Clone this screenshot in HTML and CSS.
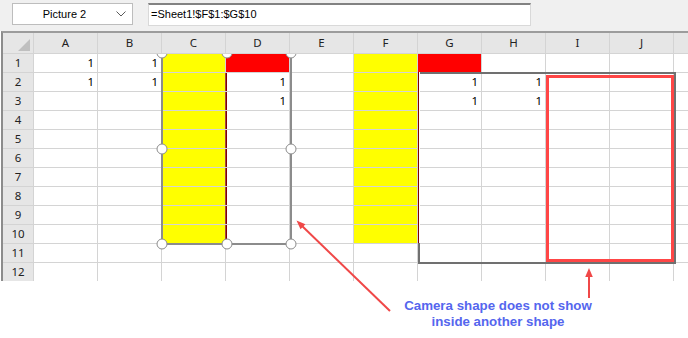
FILE: index.html
```html
<!DOCTYPE html>
<html lang="en">
<head>
  <meta charset="UTF-8">
  <title>Camera shape</title>
  <link rel="stylesheet" href="styles.css">
</head>
<body>

  <!-- Name box + formula bar -->
  <div class="topbar">
    <div class="namebox">
      <span class="name">Picture 2</span>
      <span class="chev">
        <svg width="10" height="6" viewBox="0 0 10 6"><polyline points="0.5,0.5 5,5 9.5,0.5" fill="none" stroke="#5a5a5a" stroke-width="1"/></svg>
      </span>
    </div>
    <div class="formula">=Sheet1!$F$1:$G$10</div>
  </div>

  <!-- Worksheet grid -->
  <div class="sheet">
    <div class="h corner"><span class="tri"></span></div><div class="h">A</div><div class="h">B</div><div class="h">C</div><div class="h">D</div><div class="h">E</div><div class="h">F</div><div class="h">G</div><div class="h">H</div><div class="h">I</div><div class="h">J</div><div class="h"></div>
    <div class="rh">1</div><div class="n">1</div><div class="n">1</div><div class="y"></div><div class="r"></div><div></div><div class="y"></div><div class="r"></div><div></div><div></div><div></div><div></div>
    <div class="rh">2</div><div class="n">1</div><div class="n">1</div><div class="y"></div><div class="n dl">1</div><div></div><div class="y"></div><div class="n">1</div><div class="n">1</div><div></div><div></div><div></div>
    <div class="rh">3</div><div></div><div></div><div class="y"></div><div class="n dl">1</div><div></div><div class="y"></div><div class="n">1</div><div class="n">1</div><div></div><div></div><div></div>
    <div class="rh">4</div><div></div><div></div><div class="y"></div><div class="dl"></div><div></div><div class="y"></div><div></div><div></div><div></div><div></div><div></div>
    <div class="rh">5</div><div></div><div></div><div class="y"></div><div class="dl"></div><div></div><div class="y"></div><div></div><div></div><div></div><div></div><div></div>
    <div class="rh">6</div><div></div><div></div><div class="y"></div><div class="dl"></div><div></div><div class="y"></div><div></div><div></div><div></div><div></div><div></div>
    <div class="rh">7</div><div></div><div></div><div class="y"></div><div class="dl"></div><div></div><div class="y"></div><div></div><div></div><div></div><div></div><div></div>
    <div class="rh">8</div><div></div><div></div><div class="y"></div><div class="dl"></div><div></div><div class="y"></div><div></div><div></div><div></div><div></div><div></div>
    <div class="rh">9</div><div></div><div></div><div class="y"></div><div class="dl"></div><div></div><div class="y"></div><div></div><div></div><div></div><div></div><div></div>
    <div class="rh">10</div><div></div><div></div><div class="y"></div><div class="dl"></div><div></div><div class="y"></div><div></div><div></div><div></div><div></div><div></div>
    <div class="rh">11</div><div></div><div></div><div></div><div></div><div></div><div></div><div></div><div></div><div></div><div></div><div></div>
    <div class="rh">12</div><div></div><div></div><div></div><div></div><div></div><div></div><div></div><div></div><div></div><div></div><div></div>
  </div>

  <!-- Shapes floating over the cells -->
  <div class="layer">
    <div class="cam">
      <span class="handle hl ht"></span><span class="handle hc ht"></span><span class="handle hr ht"></span>
      <span class="handle hl hm"></span><span class="handle hr hm"></span>
      <span class="handle hl hb"></span><span class="handle hc hb"></span><span class="handle hr hb"></span>
    </div>
    <div class="frame"></div>
    <div class="focus"></div>
  </div>

  <!-- Callout -->
  <svg class="arrows" width="688" height="338" viewBox="0 0 688 338">
    <line x1="390" y1="311" x2="300" y2="224" stroke="#f04848" stroke-width="2"/>
    <polygon points="296.5,220.5 305.4,224.2 300.5,229.3" fill="#f04848"/>
    <line x1="589" y1="298" x2="589" y2="274" stroke="#f04848" stroke-width="2"/>
    <polygon points="589,268 592.8,277 585.2,277" fill="#f04848"/>
  </svg>
  <div class="note">Camera shape does not show<br>inside another shape</div>

</body>
</html>
```

FILE: styles.css
```css
  body {
    margin: 0;
    width: 688px;
    height: 338px;
    overflow: hidden;
    position: relative;
    background: #fff;
    font-family: "Noto Sans", sans-serif;
    color: #000;
  }

  /* Top bar */
  .topbar {
    height: 31px;
    box-sizing: border-box;
    background: #f0f0f0;
    display: flex;
    align-items: flex-start;
    gap: 15px;
    padding: 3px 0 0 12px;
    font-family: "Liberation Sans", Arial, sans-serif;
    font-size: 11px;
  }

  .namebox {
    width: 121px;
    height: 22px;
    box-sizing: border-box;
    border: 1px solid #bdbdbd;
    background: #fff;
    display: flex;
    align-items: center;
  }

  .name {
    flex: 1;
    text-align: center;
    padding-left: 4px;
  }

  .chev {
    width: 18px;
    margin-right: 2px;
    display: flex;
    justify-content: center;
  }

  .formula {
    width: 383px;
    height: 23px;
    box-sizing: border-box;
    background: #fff;
    border: 1px solid #d9d9d9;
    border-top: 2px solid #828282;
    padding-left: 2px;
    line-height: 19px;
  }

  /* Grid */
  .sheet {
    margin-left: 1px;
    border-top: 2px solid #9c9c9c;
    border-left: 2px solid #8c8c8c;
    display: grid;
    grid-template-columns: 30px repeat(10, 63px) 1fr;
    grid-template-rows: 20px repeat(12, 18px);
    gap: 1px;
    background: #d4d4d4;
    font-size: 11.5px;
  }

  .sheet > div {
    background: #fff;
    line-height: 18px;
    padding: 0 3px;
    box-sizing: border-box;
  }

  .sheet > .h {
    background: #e6e6e6;
    color: #222;
    text-align: center;
    line-height: 20px;
  }

  .sheet > .rh {
    background: #e6e6e6;
    color: #222;
    text-align: center;
    padding: 0;
  }

  .sheet > .corner {
    display: flex;
    justify-content: flex-end;
    align-items: flex-end;
    padding: 0 3px 2px 0;
  }

  .tri {
    width: 12px;
    height: 12px;
    background: #bfbfbf;
    clip-path: polygon(100% 0, 100% 100%, 0 100%);
  }

  .n { text-align: right; }
  .sheet > .y { background: #ffff00; }
  .sheet > .r { background: #ff0000; }
  .dl {
    border-left: 1px solid #800000;
    box-shadow: -1px 0 0 #a04848;
  }

  /* Shapes */
  .layer {
    position: absolute;
    left: 0;
    top: 54px;
    width: 688px;
    height: 227px;
    overflow: hidden;
    pointer-events: none;
  }

  .cam {
    position: absolute;
    left: 161px;
    top: -2px;
    width: 131px;
    height: 193px;
    box-sizing: border-box;
    border: 2px solid #8c8c8c;
  }

  .handle {
    position: absolute;
    width: 11px;
    height: 11px;
    box-sizing: border-box;
    border: 1.5px solid #8c8c8c;
    border-radius: 50%;
    background: #fff;
    transform: translate(-50%, -50%);
  }
  .hl { left: -1px; }
  .hc { left: 50%; }
  .hr { left: calc(100% + 1px); }
  .ht { top: -1px; }
  .hm { top: 50%; }
  .hb { top: calc(100% + 1px); }

  .frame {
    position: absolute;
    left: 418px;
    top: 18px;
    width: 258px;
    height: 192px;
    box-sizing: border-box;
    border: 2px solid #707070;
  }

  .frame::before {
    content: "";
    position: absolute;
    left: -2px;
    top: -2px;
    width: 2px;
    height: 171px;
    background: linear-gradient(90deg, #800000 50%, #fff 50%);
  }

  .focus {
    position: absolute;
    left: 546px;
    top: 21px;
    width: 128px;
    height: 187px;
    box-sizing: border-box;
    border: 3px solid #ff4646;
  }

  .arrows {
    position: absolute;
    left: 0;
    top: 0;
    pointer-events: none;
  }

  /* Annotation */
  .note {
    width: 240px;
    margin: 17px 0 0 378px;
    text-align: center;
    font-family: "Liberation Sans", Arial, sans-serif;
    font-weight: bold;
    font-size: 13.3px;
    line-height: 16px;
    color: #5566ee;
  }
```
